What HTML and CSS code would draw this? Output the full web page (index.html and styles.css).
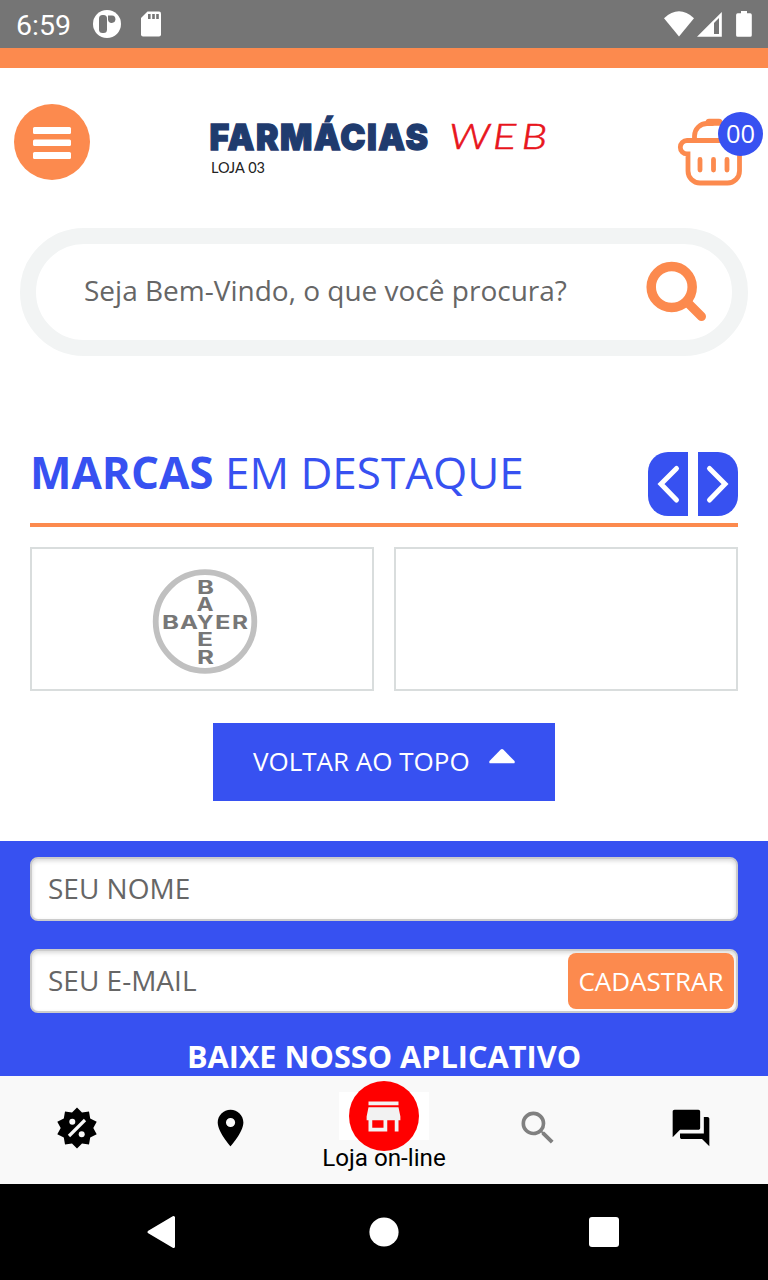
FILE: index.html
```html
<!DOCTYPE html>
<html lang="pt-BR">
<head>
<meta charset="utf-8">
<title>Farmácias Web</title>
<link rel="stylesheet" href="styles.css">
</head>
<body>
<div class="screen">
  <div class="status">
    <span class="clock">6:59</span>
    <svg class="status-left" width="76" height="48" viewBox="90 0 76 48">
      <circle cx="107" cy="24" r="14" fill="#fff"/>
      <rect x="99" y="15" width="8" height="18" rx="3.500" fill="#757575"/>
      <path d="M108 15.500h4a3.700 3.700 0 1 1-4 4z" fill="#757575"/>
      <path d="M147.500 11.500H159a2 2 0 0 1 2 2V34.500a2 2 0 0 1-2 2H143a2 2 0 0 1-2-2V18z" fill="#fff"/>
      <path d="M148 14h2.600v5H148zM152.200 14h2.600v5h-2.600zM156.200 14h2.600v5h-2.600z" fill="#757575"/>
    </svg>
    <svg class="status-right" width="94" height="48" viewBox="660 0 94 48">
      <path d="M664 18.200Q679 4.500 694 18.200L679 36.500z" fill="#fff"/>
      <path d="M721.800 12V36.800H697z" fill="#fff"/>
      <path d="M719 18V34H714V23z" fill="#757575"/>
      <path d="M741 11h6v2.300h3.200a1.600 1.600 0 0 1 1.600 1.600V35.200a1.600 1.600 0 0 1-1.600 1.600H737.700a1.600 1.600 0 0 1-1.600-1.600V14.900a1.600 1.600 0 0 1 1.600-1.600H741z" fill="#fff"/>
    </svg>
  </div>
  <div class="topline"></div>

  <header class="header">
    <div class="menu">
      <svg width="38" height="32" viewBox="0 0 38 32" fill="#fff">
        <rect width="38" height="7" rx="1.500"/><rect y="12.500" width="38" height="6.500" rx="1.500"/><rect y="25" width="38" height="7" rx="1.500"/>
      </svg>
    </div>
    <svg class="logo" width="380" height="100" viewBox="190 92 380 100">
      <text class="logo-main" x="209.500" y="149.500" textLength="220" lengthAdjust="spacingAndGlyphs">FARMÁCIAS</text>
      <text class="logo-web" transform="translate(449 149) scale(1.250 1)" x="0 35 58" y="0">WEB</text>
      <text class="logo-store" x="211" y="173" textLength="54" lengthAdjust="spacingAndGlyphs">LOJA 03</text>
    </svg>
    <div class="cart">
      <svg width="90" height="80" viewBox="673.500 110 90 80" fill="none" stroke="#fc8a4e" stroke-width="4.800" stroke-linecap="round">
        <path d="M740 140.500H686.500a6.500 6.500 0 0 0 0 13.400h1V171a12 12 0 0 0 12 12H727a12 12 0 0 0 12-12V150"/>
        <path d="M694 139V136a12.500 12.500 0 0 1 12.500-12.500H712"/>
        <path d="M708.500 122.300h10" stroke-width="7"/>
        <path d="M699.500 159.500V170M713 159.500V170M726.500 159.500V170"/>
      </svg>
      <span class="count">00</span>
    </div>
  </header>

  <div class="search">
    <span>Seja Bem-Vindo, o que você procura?</span>
    <svg width="62" height="62" viewBox="645 261 62 62" fill="none" stroke="#fc8a4e">
      <circle cx="671.700" cy="287" r="20.500" stroke-width="9.500"/>
      <path d="M686.500 301.500L701.500 316.500" stroke-width="9" stroke-linecap="round"/>
    </svg>
  </div>

  <section class="brands">
    <div class="heading">
      <h2><b>MARCAS</b> EM DESTAQUE</h2>
      <div class="arrows">
        <span class="prev"><svg width="40" height="64" viewBox="0 0 40 64"><path d="M28.500 16.500L13 32L28.500 48"/></svg></span>
        <span class="next"><svg width="40" height="64" viewBox="0 0 40 64"><path d="M11.500 16.500L27 32L11.500 48"/></svg></span>
      </div>
    </div>
    <div class="cards">
      <div class="card">
        <svg class="bayer" width="110" height="110" viewBox="150 567 110 110">
          <circle cx="205" cy="621.500" r="49.300" fill="none" stroke="#c0c0c0" stroke-width="5.800"/>
          <g class="bayer-text">
            <text x="162" y="628.500" textLength="17" lengthAdjust="spacingAndGlyphs">B</text>
            <text x="180" y="628.500" textLength="18" lengthAdjust="spacingAndGlyphs">A</text>
            <text x="197" y="628.500" textLength="16.500" lengthAdjust="spacingAndGlyphs">Y</text>
            <text x="215" y="628.500" textLength="15.500" lengthAdjust="spacingAndGlyphs">E</text>
            <text x="232" y="628.500" textLength="16" lengthAdjust="spacingAndGlyphs">R</text>
            <text x="197" y="593.500" textLength="17" lengthAdjust="spacingAndGlyphs">B</text>
            <text x="196.500" y="611" textLength="17" lengthAdjust="spacingAndGlyphs">A</text>
            <text x="197" y="646" textLength="16" lengthAdjust="spacingAndGlyphs">E</text>
            <text x="197" y="664" textLength="17" lengthAdjust="spacingAndGlyphs">R</text>
          </g>
        </svg>
      </div>
      <div class="card"></div>
    </div>
    <div class="top-button">
      <span>VOLTAR AO TOPO</span>
      <svg width="26" height="15" viewBox="0 0 26 15"><path d="M11.500.8Q13-.7 14.500.8L25.500 12Q26.500 14.300 24 14.300H2Q-.5 14.300.5 12z" fill="#fff"/></svg>
    </div>
  </section>

  <section class="newsletter">
    <div class="field"><span class="hint">SEU NOME</span></div>
    <div class="field"><span class="hint">SEU E-MAIL</span><span class="submit">CADASTRAR</span></div>
    <h3>BAIXE NOSSO APLICATIVO</h3>
  </section>

  <nav class="tabs">
    <div class="tab"><svg width="44" height="44" viewBox="-22 -22 44 44">
      <path d="M0-20.500L5-15.500L12-16.600L13.200-9.600L19.700-6.300L16.300 0L19.700 6.300L13.200 9.600L12 16.600L5 15.500L0 20.500L-5 15.500L-12 16.600L-13.200 9.600L-19.700 6.300L-16.300 0L-19.700-6.300L-13.200-9.600L-12-16.600L-5-15.500z"/>
      <path d="M-8 8L8-8" stroke="#f9f9f9" stroke-width="3.200"/><circle cx="-4.700" cy="-6.300" r="3" fill="#f9f9f9"/><circle cx="4.700" cy="6.300" r="3" fill="#f9f9f9"/>
    </svg></div>
    <div class="tab"><svg width="44" height="44" viewBox="-.3 0 24 24"><path d="M12 2C8.130 2 5 5.130 5 9c0 5.250 7 13 7 13s7-7.750 7-13c0-3.870-3.130-7-7-7zm0 9.500a2.500 2.500 0 0 1 0-5 2.500 2.500 0 0 1 0 5z"/></svg></div>
    <div class="tab active">
      <div class="backing"><div class="disc"><svg width="45" height="45" viewBox="0 0 24 24" fill="#f2f2f2"><path d="M20 4H4v2h16V4zm1 10v-2l-1-5H4l-1 5v2h1v6h10v-6h4v6h2v-6h1zm-9 4H6v-4h6v4z"/></svg></div></div>
      <span>Loja on-line</span>
    </div>
    <div class="tab"><svg width="44" height="44" viewBox="0 0 24 24" fill="#808080"><path d="M15.500 14h-.79l-.28-.27A6.471 6.471 0 0 0 16 9.500 6.500 6.500 0 1 0 9.500 16c1.610 0 3.090-.59 4.230-1.570l.27.28v.79l5 4.990L20.490 19l-4.990-5zm-6 0C7.010 14 5 11.990 5 9.500S7.010 5 9.500 5 14 7.010 14 9.500 11.990 14 9.500 14z"/></svg></div>
    <div class="tab"><svg width="44" height="44" viewBox="0 0 24 24"><path d="M21 6h-2v9H6v2c0 .55.45 1 1 1h11l4 4V7c0-.55-.45-1-1-1zm-4 6V3c0-.55-.45-1-1-1H3c-.55 0-1 .45-1 1v14l4-4h10c.55 0 1-.45 1-1z"/></svg></div>
  </nav>

  <div class="system">
    <svg width="30" height="34" viewBox="0 0 30 34"><path d="M26.500 2.500V31.500L2 17z" fill="#fff" stroke="#fff" stroke-width="3" stroke-linejoin="round"/></svg>
    <svg width="30" height="30" viewBox="-1 0 30 30"><circle cx="15" cy="15" r="14.600" fill="#fff"/></svg>
    <svg width="30" height="30" viewBox="0 0 30 30"><rect width="30" height="30" rx="3" fill="#fff"/></svg>
  </div>
</div>
</body>
</html>
```
FILE: styles.css
```css
* { box-sizing: border-box; }
body { margin: 0; background: #fff; font-family: "Open Sans", sans-serif; }
svg { display: block; flex: none; overflow: visible; }
h2, h3 { margin: 0; font-weight: 400; }
.screen { width: 768px; height: 1280px; overflow: hidden; display: flex; flex-direction: column; }
.screen > * { flex: none; }

.status { height: 48px; background: #757575; display: flex; align-items: center; padding-left: 16px; padding-right: 14px; }
.clock { width: 74px; font: 28.500px/46px Roboto, sans-serif; color: #fff; padding-top: 4px; }
.status-right { margin-left: auto; }
.topline { height: 20px; background: #fc8a4e; }

.header { height: 160px; display: flex; justify-content: space-between; align-items: flex-start; padding: 24px 4px 0 14px; }
.menu { width: 76px; height: 76px; margin-top: 12px; border-radius: 50%; background: #fc8a4e; display: flex; align-items: center; justify-content: center; padding-top: 2px; }
.logo { margin-right: 4px; }
.logo-main { font: 900 36px Inter, sans-serif; letter-spacing: 1.500px; fill: #1f3b6e; stroke: #1f3b6e; stroke-width: 1.300px; }
.logo-web { font: italic 300 35px Lato, sans-serif; fill: #e8141c; stroke: #e8141c; stroke-width: .6px; }
.logo-store { font: 15.500px Lato, sans-serif; fill: #222; }
.cart { position: relative; margin-top: 18px; }
.count { position: absolute; left: 44px; top: 2px; width: 45px; height: 44px; border-radius: 50%; background: #3751f1; color: #fff; font-size: 25.500px; line-height: 43px; text-align: center; }

.search { height: 128px; margin: 0 20px; border: 16px solid #f2f4f4; border-radius: 64px; display: flex; align-items: center; justify-content: space-between; padding: 0 25px 0 48px; font-size: 28px; color: #666; }
.search span { white-space: nowrap; padding-bottom: 4px; }

.brands { height: 485px; padding: 96px 30px 0; }
.heading { height: 75px; border-bottom: 4px solid #fc8a4e; display: flex; justify-content: space-between; align-items: flex-start; }
.heading h2 { font-size: 44px; line-height: 40px; color: #3751f1; white-space: nowrap; }
.arrows { display: flex; gap: 10px; }
.arrows path { fill: none; stroke: #fff; stroke-width: 5px; stroke-linecap: round; }
.prev, .next { background: #3751f1; }
.prev { border-radius: 20px 0 0 20px; }
.next { border-radius: 0 20px 20px 0; }
.cards { display: grid; grid-template-columns: 1fr 1fr; gap: 20px; margin-top: 20px; }
.card { height: 144px; border: 2px solid #d9dddd; display: flex; align-items: center; justify-content: center; }
.bayer { margin-left: 6px; margin-top: 5px; }
.bayer-text { font: 700 19px Inter, sans-serif; fill: #777; }
.top-button { width: 342px; height: 78px; margin: 32px auto 0; background: #3751f1; color: #fff; display: flex; align-items: center; justify-content: space-between; padding: 0 40px; font-size: 26px; }
.top-button span { white-space: nowrap; padding-bottom: 2px; }
.top-button svg { margin-bottom: 12px; }

.newsletter { height: 235px; background: #3751f1; padding: 16px 30px 0; display: flex; flex-direction: column; }
.field { height: 64px; flex: none; margin-bottom: 28px; padding: 0 2px 0 16px; border: 2px solid #ccc; border-radius: 8px; background: #fff; box-shadow: inset 0 2px 4px rgba(0,0,0,.15); display: flex; align-items: center; justify-content: space-between; font-size: 28px; color: #666; }
.hint { padding-bottom: 2px; }
.submit { width: 166px; height: 56px; border-radius: 8px; background: #fc8a4e; color: #fff; font-size: 26px; line-height: 57px; text-align: center; }
.newsletter h3 { font-size: 30.700px; line-height: 30px; font-weight: 700; color: #fff; text-align: center; }

.tabs { height: 108px; background: #f9f9f9; display: grid; grid-template-columns: repeat(5, 1fr); }
.tab { display: flex; align-items: center; justify-content: center; padding-bottom: 4px; }
.active { flex-direction: column; justify-content: flex-start; padding: 16px 0 0; font: 24.200px/28px Roboto, sans-serif; color: #000; }
.backing { width: 90px; height: 48px; background: #fff; display: flex; align-items: center; justify-content: center; }
.disc { width: 70px; height: 70px; flex: none; border-radius: 50%; background: #f00; display: flex; align-items: center; justify-content: center; }
.active span { margin-top: 4px; white-space: nowrap; }

.system { height: 96px; background: #000; display: flex; align-items: center; justify-content: space-between; padding: 0 149px 0 147px; }
```
